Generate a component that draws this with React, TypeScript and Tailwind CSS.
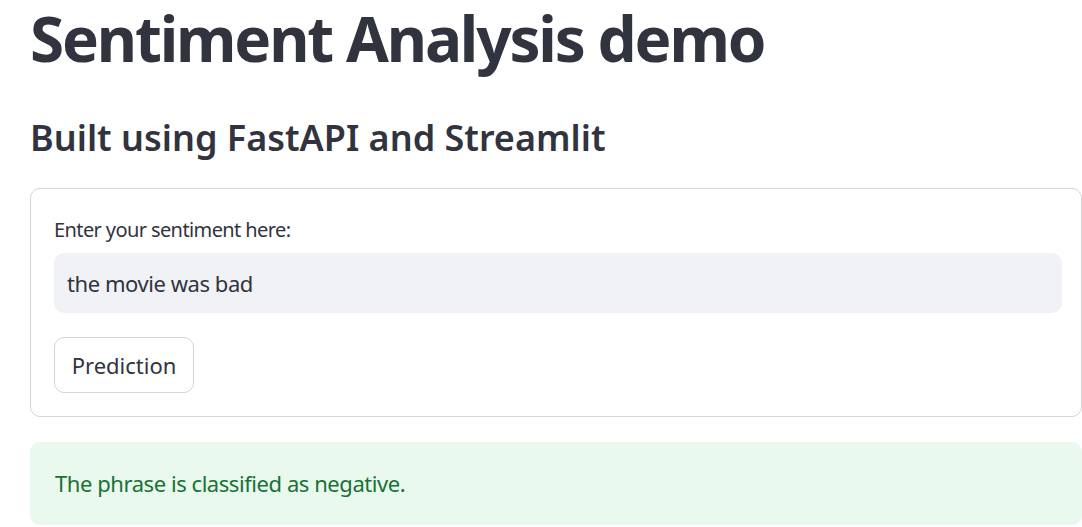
const font = { fontFamily: '"Noto Sans", "Open Sans", sans-serif' };

export default function App() {
  return (
    <div
      className="h-screen w-full overflow-hidden bg-white pl-[30px] text-[#31333f]"
      style={font}
    >
      <h1 className="h-[76px] text-[62px] font-bold leading-[76px] tracking-[-0.035em]">
        Sentiment Analysis demo
      </h1>
      <h3 className="mt-[40px] h-[44px] text-[36px] font-semibold leading-[44px]">
        Built using FastAPI and Streamlit
      </h3>

      <form className="mt-[28px] w-[1052px] rounded-[10px] border border-[#d6d6d9] pb-[23px] pl-[23px] pr-[19px] pt-[27px]">
        <label className="block h-[28px] text-[20px] leading-[28px] tracking-[-0.03em]">
          Enter your sentiment here:
        </label>
        <div className="mt-[9px] flex h-[60px] items-center rounded-[10px] bg-[#f0f2f6] pl-[13px] text-[22px] tracking-[-0.02em]">
          the movie was bad
        </div>
        <button
          type="button"
          className="mt-[24px] flex h-[56px] w-[140px] items-center justify-center rounded-[10px] border border-[#d6d6d9] bg-white text-[22px]"
        >
          Prediction
        </button>
      </form>

      <div className="mt-[25px] flex h-[83px] w-[1052px] items-center rounded-[10px] bg-[#e9f9ee] pl-[25px] text-[22px] tracking-[-0.02em] text-[#177233]">
        The phrase is classified as negative.
      </div>
    </div>
  );
}
